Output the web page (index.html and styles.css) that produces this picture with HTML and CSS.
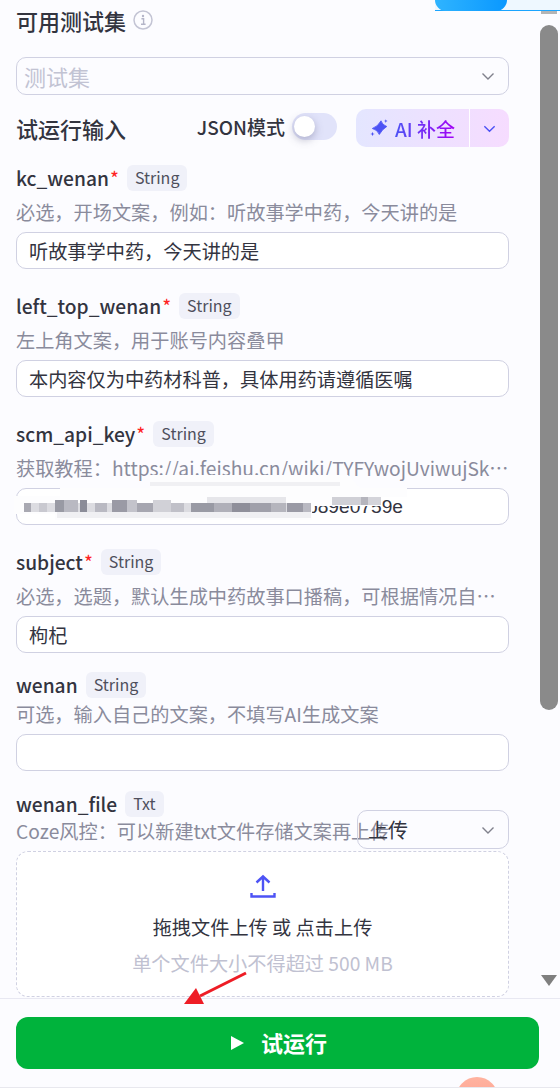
FILE: index.html
```html
<!DOCTYPE html>
<html lang="zh">
<head>
<meta charset="utf-8">
<title>试运行</title>
<link rel="stylesheet" href="styles.css">
</head>
<body>
<div class="page">
  <div class="topbar"><div class="top-btn"></div></div>
  <div class="scroll-stub"></div>
  <div class="scroll-thumb"></div>
  <div class="scroll-down"></div>

  <main class="content">
    <div class="title-row">
      <h2 class="title">可用测试集</h2>
      <svg class="info" viewBox="0 0 20 20"><circle cx="10" cy="10" r="9" fill="none" stroke="#c3c4d4" stroke-width="1.5"/><circle cx="10" cy="6" r="1.2" fill="#b4b5c8"/><path d="M8.400 8.800h2.200v5.200M8 14.300h4.600" fill="none" stroke="#b4b5c8" stroke-width="1.400"/></svg>
    </div>
    <div class="box select placeholder">测试集<svg class="chev" viewBox="0 0 16 16"><path d="M2.500 5.500 8 11l5.500-5.500" fill="none" stroke="#80818c" stroke-width="1.400"/></svg></div>

    <div class="run-row">
      <span class="title">试运行输入</span>
      <div class="run-tools">
        <span class="json">JSON模式</span>
        <span class="toggle"><span class="knob"></span></span>
        <div class="ai">
          <span class="ai-main">
            <svg class="spark" viewBox="0 0 18 18"><path d="M11 1.800Q12.300 6 16.800 7.500 12.500 10 9.300 15.500 7.500 10.800 2.300 9.500 8 7.500 11 1.800z" fill="#4d53f5" stroke="#4d53f5" stroke-width=".8" stroke-linejoin="round"/><path d="M2.500 12.800l.6 1.600 1.600.6-1.600.6-.6 1.600-.6-1.600-1.600-.6 1.600-.6zM15.800.3l.5 1.300 1.300.5-1.300.5-.5 1.300-.5-1.300-1.300-.5 1.300-.5z" fill="#4d53f5"/></svg>
            <span class="ai-text">AI 补全</span>
          </span>
          <span class="ai-more"><svg viewBox="0 0 16 16"><path d="M2.500 5.500 8 11l5.500-5.500" fill="none" stroke="#4d53f5" stroke-width="1.500"/></svg></span>
        </div>
      </div>
    </div>

    <section class="field f1">
      <div class="label"><b>kc_wenan</b><i>*</i><span class="tag">String</span></div>
      <p class="desc">必选，开场文案，例如：听故事学中药，今天讲的是</p>
      <div class="box input">听故事学中药，今天讲的是</div>
    </section>
    <section class="field">
      <div class="label"><b>left_top_wenan</b><i>*</i><span class="tag">String</span></div>
      <p class="desc">左上角文案，用于账号内容叠甲</p>
      <div class="box input">本内容仅为中药材科普，具体用药请遵循医嘱</div>
    </section>
    <section class="field">
      <div class="label"><b>scm_api_key</b><i>*</i><span class="tag">String</span></div>
      <p class="desc">获取教程：https://ai.feishu.cn/wiki/TYFYwojUviwujSkxxxxxxxxxxxxxxxx</p>
      <div class="box input key"><span class="key-value">b89e0759e</span></div>
      <svg class="mosaic" viewBox="14 474 400 50">
        <path d="M14 496H60V488H150V475H348L360 488H407V497H381V506H312V520H55V514H14z" fill="#fdfdfe"/>
        <rect x="57" y="512" width="254" height="6" fill="#f0f0f3"/>
        <rect x="150" y="482" width="190" height="4" fill="#f0f0f3"/>
        <rect x="207" y="497" width="79" height="6" fill="#e6e6ea"/>
        <rect x="24" y="503" width="287" height="9" fill="#dcdce1"/>
        <rect x="24" y="503" width="7" height="9" fill="#a9a9b2"/>
        <rect x="39" y="503" width="8" height="9" fill="#c9c9d0"/>
        <rect x="55" y="500" width="9" height="12" fill="#999aa4"/>
        <rect x="64" y="500" width="14" height="12" fill="#b9b9c2"/>
        <rect x="80" y="500" width="7" height="12" fill="#8b8c98"/>
        <rect x="95" y="503" width="12" height="9" fill="#b9b9c2"/>
        <rect x="112" y="500" width="15" height="12" fill="#9a9aa5"/>
        <rect x="127" y="500" width="10" height="12" fill="#c3c3cb"/>
        <rect x="137" y="503" width="16" height="9" fill="#a6a6b0"/>
        <rect x="153" y="500" width="18" height="12" fill="#d1d1d7"/>
        <rect x="171" y="503" width="13" height="9" fill="#c0c0c8"/>
        <rect x="191" y="503" width="23" height="9" fill="#999aa4"/>
        <rect x="214" y="503" width="18" height="9" fill="#b0b0b9"/>
        <rect x="232" y="503" width="18" height="9" fill="#8f8f9a"/>
        <rect x="250" y="503" width="21" height="9" fill="#a0a0aa"/>
        <rect x="271" y="503" width="15" height="9" fill="#b5b5bd"/>
        <rect x="287" y="503" width="16" height="9" fill="#9a9aa5"/>
        <rect x="303" y="503" width="8" height="9" fill="#b9b9c2"/>
        <rect x="332" y="497" width="29" height="8" fill="#d0d0d6"/>
        <rect x="361" y="497" width="7" height="8" fill="#b5b5bd"/>
        <rect x="368" y="497" width="13" height="8" fill="#d4d4da"/>
      </svg>
    </section>
    <section class="field">
      <div class="label"><b>subject</b><i>*</i><span class="tag">String</span></div>
      <p class="desc">必选，选题，默认生成中药故事口播稿，可根据情况自行修改内容和选题</p>
      <div class="box input">枸杞</div>
    </section>
    <section class="field tight">
      <div class="label"><b>wenan</b><span class="tag">String</span></div>
      <p class="desc">可选，输入自己的文案，不填写AI生成文案</p>
      <div class="box input"></div>
    </section>
    <section class="field file">
      <div class="label"><b>wenan_file</b><span class="tag">Txt</span></div>
      <p class="desc">Coze风控：可以新建txt文件存储文案再上传</p>
      <div class="box upload-type">上传<svg class="chev" viewBox="0 0 16 16"><path d="M2.500 5.500 8 11l5.500-5.500" fill="none" stroke="#80818c" stroke-width="1.400"/></svg></div>
      <div class="drop">
        <svg class="up" viewBox="0 0 26 26"><path d="M13 2.500V17M6.500 8.500 13 2.500l6.500 6M1.500 19v3.500h23V19" fill="none" stroke="#4d53f5" stroke-width="2.400"/></svg>
        <div class="drop-main">拖拽文件上传 或 点击上传</div>
        <div class="drop-sub">单个文件大小不得超过 500 MB</div>
      </div>
    </section>
  </main>

  <footer class="footer">
    <button class="run" type="button"><svg viewBox="0 0 14 14"><path d="M1 0 14 7 1 14z" fill="#fff"/></svg><span>试运行</span></button>
  </footer>

  <svg class="arrow" viewBox="180 970 70 36"><path d="M246 973 200 996" stroke="#ee1c25" stroke-width="3" fill="none"/><path d="M184 1004 196 988 204 1004z" fill="#ee1c25"/></svg>
  <div class="blob"></div>
</div>
</body>
</html>
```

FILE: styles.css
```css
* { box-sizing: border-box; }
html, body { margin: 0; padding: 0; }
body { background: #fcfcff; font-family: "Noto Sans CJK SC", "Noto Sans", sans-serif; color: #33343f; }
.page { position: relative; width: 560px; height: 1088px; overflow: hidden; border-bottom: 1px solid #e8e8ee; }

.topbar { position: absolute; left: 435px; top: 0; width: 125px; height: 11px; background: #eef8ff; border-bottom: 1px solid #1ba5ff; }
.top-btn { width: 72px; height: 11px; background: linear-gradient(90deg, #2fb4ff, #0a98ff); border-radius: 0 0 12px 12px; }
.scroll-stub { position: absolute; left: 541px; top: 11px; width: 16px; height: 3px; background: #b5b5b5; }
.scroll-thumb { position: absolute; left: 540px; top: 25px; width: 18px; height: 685px; background: #8a8a8a; border-radius: 9px; }
.scroll-down { position: absolute; left: 541px; top: 975px; width: 0; height: 0; border-left: 8px solid transparent; border-right: 8px solid transparent; border-top: 11px solid #7f7f7f; }

.content { width: 540px; height: 998px; padding: 4px 31px 0 16px; }
.title-row { display: flex; align-items: center; gap: 7px; height: 32px; }
.title { margin: 0; font-size: 22px; font-weight: 500; line-height: 32px; color: #33343f; }
.info { width: 20px; height: 20px; }

.box { border: 1px solid #d0d1e2; border-radius: 10px; background: #fff; font-size: 19.200px; display: flex; align-items: center; padding: 0 12px; }
.select { height: 38px; margin-top: 21px; justify-content: space-between; padding: 0 12px 0 7px; background: #fcfcff; font-size: 22px; }
.placeholder { color: #c2c3d3; }
.chev { width: 16px; height: 16px; flex: none; }

.run-row { display: flex; justify-content: space-between; align-items: center; height: 38px; margin-top: 14px; }
.run-tools { display: flex; align-items: center; }
.json { font-size: 19px; font-weight: 500; margin-right: 7px; margin-top: -4px; }
.toggle { width: 45px; height: 27px; border-radius: 14px; background: #e1e3fa; margin-right: 19px; margin-top: -3px; display: flex; align-items: center; padding-left: 2px; }
.knob { width: 21px; height: 21px; border-radius: 50%; background: #fff; box-shadow: 0 3px 8px rgba(70, 70, 110, .35); }
.ai { display: flex; width: 153px; height: 38px; border-radius: 10px; overflow: hidden; background: linear-gradient(90deg, #e4e6ff, #f6dcff); }
.ai-main { width: 114px; display: flex; align-items: center; padding-left: 14px; gap: 7px; border-right: 1px solid #fff; }
.spark { width: 18px; height: 18px; flex: none; }
.ai-text { font-size: 19px; font-weight: 500; background: linear-gradient(90deg, #4d53f5, #a200f5); -webkit-background-clip: text; background-clip: text; color: transparent; white-space: nowrap; }
.ai-more { flex: 1; display: flex; align-items: center; justify-content: center; }
.ai-more svg { width: 15px; height: 15px; }

.field { position: relative; height: 128px; }
.f1 { margin-top: 18px; }
.tight { height: 119px; margin-top: -5px; }
.tight .desc { margin: 2px 0 6px; }
.label { display: flex; align-items: center; height: 26px; font-size: 19.200px; line-height: 26px; }
.label b { font-weight: 500; color: #33343f; margin-top: -1px; }
.label i { font-style: normal; color: #f22; margin-left: 1px; }
.tag { margin-left: 8px; height: 26px; padding: 0 8px; border-radius: 6px; background: #f0f1f9; font-size: 16px; line-height: 25px; color: #4e4f5c; }
.desc { margin: 7px 0 6px; height: 28px; line-height: 28px; font-size: 19.200px; color: #8a8b9c; white-space: nowrap; overflow: hidden; text-overflow: ellipsis; }
.input { height: 37px; }
.key { justify-content: flex-start; }
.key-value { font-family: "Liberation Sans", sans-serif; font-size: 19.200px; margin-left: 278px; white-space: nowrap; color: #33343f; }
.mosaic { position: absolute; left: -2px; top: 53px; width: 400px; height: 50px; }

.file { height: 210px; }
.file .desc { margin: 0; }
.upload-type { position: absolute; left: 341px; top: 19px; width: 152px; height: 39px; background: transparent; color: #33343f; font-size: 20px; justify-content: space-between; padding: 0 12px 0 10px; }
.drop { margin-top: 6px; height: 146px; border: 1px dashed #d0d1e2; border-radius: 12px; background: #fff; display: flex; flex-direction: column; align-items: center; padding-top: 22px; }
.up { width: 26px; height: 26px; }
.drop-main { font-size: 19.200px; line-height: 26px; margin-top: 14px; color: #33343f; }
.drop-sub { font-size: 19.200px; line-height: 26px; margin-top: 10px; color: #c0c1d1; }

.footer { height: 89px; border-top: 1px solid #e8e8f2; padding: 18px 21px 0 16px; }
.run { width: 523px; height: 52px; border: 0; border-radius: 12px; background: #00b33c; color: #fff; font-family: inherit; font-size: 22px; font-weight: 700; display: flex; align-items: center; justify-content: center; gap: 17px; padding: 0 0 2px 2px; }
.run svg { width: 14px; height: 14px; margin-top: 2px; }

.arrow { position: absolute; left: 180px; top: 970px; width: 70px; height: 36px; }
.blob { position: absolute; left: 456px; top: 1077px; width: 42px; height: 42px; border-radius: 50%; background: linear-gradient(180deg, #ffb3a0, #ff9a86); }
```
